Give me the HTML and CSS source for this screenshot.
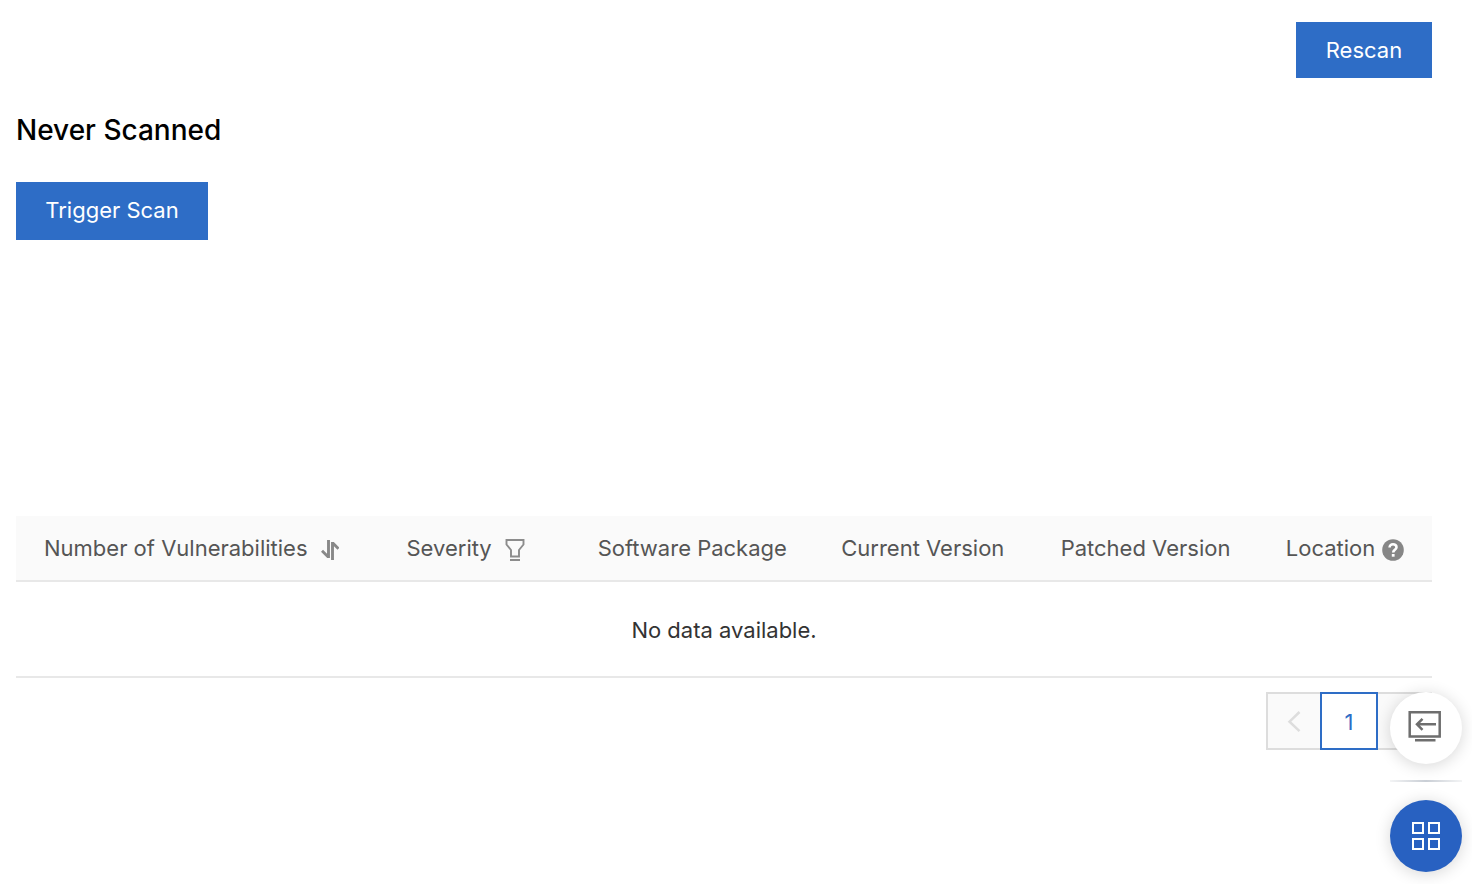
FILE: index.html
```html
<!DOCTYPE html>
<html lang="en">
<head>
<meta charset="utf-8">
<meta name="viewport" content="width=device-width, initial-scale=1">
<title>Vulnerability Scan</title>
<link rel="stylesheet" href="styles.css">
</head>
<body>
<main class="page">
  <div class="toolbar">
    <button class="btn" type="button">Rescan</button>
  </div>
  <section class="status">
    <h1 class="status-title">Never Scanned</h1>
    <button class="btn btn-trigger" type="button">Trigger Scan</button>
  </section>
  <table class="results">
    <colgroup>
      <col class="col-count"><col class="col-severity"><col class="col-package"><col class="col-current"><col class="col-patched"><col class="col-location">
    </colgroup>
    <thead>
      <tr>
        <th scope="col"><span class="head">Number of Vulnerabilities
          <button class="icon-btn sort" type="button" aria-label="Sort by number of vulnerabilities"><svg width="18" height="20" viewBox="0 0 18 20"><path d="M7.500 0v18M1 10.700l6 6M11.500 20V2M12 3.300l5.500 5.500" fill="none" stroke="#888" stroke-width="2.900"/></svg></button></span></th>
        <th scope="col"><span class="head">Severity
          <button class="icon-btn filter" type="button" aria-label="Filter by severity"><svg width="20" height="22" viewBox="0 0 20 22"><path d="M1.500 1h17v4.500L14 11v6.500H6V11L1.500 5.500zM5 21h10" fill="none" stroke="#8c8c8c" stroke-width="1.900"/></svg></button></span></th>
        <th scope="col">Software Package</th>
        <th scope="col">Current Version</th>
        <th scope="col">Patched Version</th>
        <th scope="col"><span class="head">Location
          <button class="icon-btn help" type="button" aria-label="About location"><svg width="22" height="22" viewBox="0 0 22 22"><circle cx="11" cy="11" r="10.800" fill="#868686"/><path d="M7.600 8.600C7.600 6.400 9 5.300 11 5.300c2.100 0 3.500 1.100 3.500 2.900 0 2.600-3.300 2.600-3.300 5.300" fill="none" stroke="#fff" stroke-width="2.600"/><path d="M9.800 15h2.800v2.700H9.800z" fill="#fff"/></svg></button></span></th>
      </tr>
    </thead>
    <tbody>
      <tr><td class="empty" colspan="6">No data available.</td></tr>
    </tbody>
  </table>
  <nav class="pager" aria-label="Pagination">
    <button class="pager-btn" type="button" disabled aria-label="Previous page"><svg width="14" height="22" viewBox="0 0 14 22"><path d="M12.500 1L2.500 10.700l10 9.500" fill="none" stroke="#ddd" stroke-width="2.500"/></svg></button>
    <button class="pager-btn current" type="button" aria-current="page">1</button>
    <button class="pager-btn" type="button" disabled aria-label="Next page"><svg width="14" height="22" viewBox="0 0 14 22"><path d="M1.500 1l10 9.700-10 9.500" fill="none" stroke="#ddd" stroke-width="2.500"/></svg></button>
  </nav>
</main>
<aside class="dock" aria-label="Quick tools">
  <button class="dock-btn" type="button" aria-label="Show console"><svg class="console-icon" width="34" height="32" viewBox="0 0 34 32"><path d="M1.700 2.300h30v24.300h-30zM7 30.300h20.500" fill="none" stroke="#6e6e6e" stroke-width="2.500"/><path d="M28 14.300H9M14.500 8.800L9 14.300l5.500 5.500" fill="none" stroke="#6e6e6e" stroke-width="2.500"/></svg></button>
  <div class="dock-line"></div>
  <button class="dock-btn primary" type="button" aria-label="Open apps"><svg width="28" height="28" viewBox="0 0 28 28"><path d="M1 1h10v10H1zM17 1h10v10H17zM1 17h10v10H1zM17 17h10v10H17z" fill="none" stroke="#fff" stroke-width="2"/></svg></button>
</aside>
</body>
</html>
```

FILE: styles.css
```css
* {
  box-sizing: border-box;
}

body {
  margin: 0;
  background: #fff;
  color: #333;
  font: 400 22px/32px Inter, "Liberation Sans", sans-serif;
}

button {
  margin: 0;
  border: 0;
  border-radius: 0;
  font: inherit;
  cursor: pointer;
}

svg {
  display: block;
}

.page {
  padding: 22px 40px 40px 16px;
}

.toolbar {
  display: flex;
  justify-content: flex-end;
}

.btn {
  min-width: 136px;
  padding: 12px 28px;
  background: #2e6dc6;
  color: #fff;
}

.status {
  min-height: 438px;
  padding-top: 32px;
}

.status-title {
  margin: 0 0 32px;
  color: #000;
  font-size: 28px;
  font-weight: 500;
  line-height: 40px;
}

.btn-trigger {
  min-width: 192px;
  padding: 12px 28px 14px;
}

.results {
  width: 100%;
  table-layout: fixed;
  border-collapse: separate;
  border-spacing: 0;
}

.col-count { width: 25.6%; }
.col-severity { width: 13.5%; }
.col-package { width: 17.2%; }
.col-current { width: 15.5%; }
.col-patched { width: 15.9%; }
.col-location { width: 12.3%; }

.results th {
  height: 66px;
  padding: 0 0 0 28px;
  border-bottom: 2px solid #e8e8e8;
  background: #fafafa;
  color: #555;
  font-weight: 400;
  text-align: left;
  white-space: nowrap;
}

.head {
  display: flex;
  align-items: center;
}

.icon-btn {
  padding: 4px 0 0;
  background: none;
}

.sort,
.filter {
  margin-left: 13px;
}

.help {
  margin-left: 7px;
}

.results .empty {
  height: 96px;
  padding: 2px 0 0;
  border-bottom: 2px solid #e8e8e8;
  text-align: center;
}

.pager {
  display: flex;
  justify-content: flex-end;
  margin-top: 14px;
}

.pager-btn {
  display: flex;
  align-items: center;
  justify-content: center;
  width: 56px;
  height: 58px;
  padding: 2px 0 0;
  border: 2px solid #ddd;
  background: #fafafa;
}

.pager-btn.current {
  z-index: 1;
  width: 58px;
  margin: 0 -2px;
  border-color: #2e6dc6;
  background: #fff;
  color: #2e6dc6;
}

.dock {
  position: fixed;
  z-index: 2;
  right: 10px;
  bottom: 12px;
  display: flex;
  flex-direction: column;
}

.dock-btn {
  display: grid;
  place-items: center;
  width: 72px;
  height: 72px;
  padding: 0;
  border-radius: 50%;
  background: #fff;
  box-shadow: 0 2px 16px rgba(0, 0, 0, 0.16);
}

.dock-btn.primary {
  background: #2861c1;
}

.console-icon {
  margin: 0 2px 4px 0;
}

.dock-line {
  height: 2px;
  margin: 16px 0 18px;
  background: linear-gradient(90deg, #f3f4f5, #c9ced5 50%, #f3f4f5);
}
```
